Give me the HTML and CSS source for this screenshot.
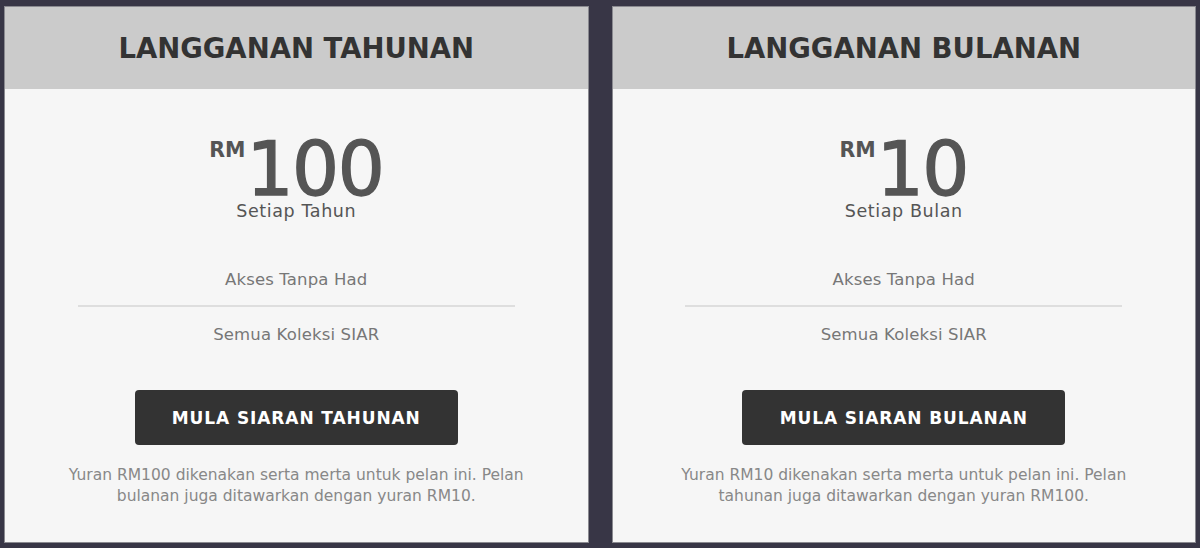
FILE: index.html
```html
<!DOCTYPE html>
<html lang="ms">
<head>
<meta charset="utf-8">
<title>Langganan</title>
<link rel="stylesheet" href="styles.css">
</head>
<body>
<div class="plans">
  <section class="plan">
    <header class="plan-head"><h2>LANGGANAN TAHUNAN</h2></header>
    <div class="plan-body">
      <div class="price">
        <span class="cur">RM</span><span class="amount">100</span>
      </div>
      <div class="period">Setiap Tahun</div>
      <ul class="features">
        <li>Akses Tanpa Had</li>
        <li>Semua Koleksi SIAR</li>
      </ul>
      <button class="cta">MULA SIARAN TAHUNAN</button>
      <p class="note">Yuran RM100 dikenakan serta merta untuk pelan ini. Pelan<br>bulanan juga ditawarkan dengan yuran RM10.</p>
    </div>
  </section>
  <section class="plan">
    <header class="plan-head"><h2>LANGGANAN BULANAN</h2></header>
    <div class="plan-body">
      <div class="price">
        <span class="cur">RM</span><span class="amount">10</span>
      </div>
      <div class="period">Setiap Bulan</div>
      <ul class="features">
        <li>Akses Tanpa Had</li>
        <li>Semua Koleksi SIAR</li>
      </ul>
      <button class="cta">MULA SIARAN BULANAN</button>
      <p class="note">Yuran RM10 dikenakan serta merta untuk pelan ini. Pelan<br>tahunan juga ditawarkan dengan yuran RM100.</p>
    </div>
  </section>
</div>
</body>
</html>
```
FILE: styles.css
```css
* { box-sizing: border-box; }
html, body { margin: 0; padding: 0; }
body {
  background: #383646;
  font-family: "DejaVu Sans", "Open Sans", sans-serif;
  width: 1200px;
  height: 548px;
  overflow: hidden;
}
.plans {
  display: flex;
  gap: 23px;
  padding: 6px 4px 5px 4px;
  height: 548px;
}
.plan {
  flex: 1;
  background: #f6f6f6;
  border: 1px solid #8a8a90;
  display: flex;
  flex-direction: column;
}
.plan-head {
  background: #cbcbcb;
  height: 82px;
  display: flex;
  align-items: center;
  justify-content: center;
}
.plan-head h2 {
  margin: 0;
  font-size: 27.5px;
  font-weight: 700;
  color: #333;
}
.plan-body {
  display: flex;
  flex-direction: column;
  align-items: center;
  padding-top: 49.4px;
}
.price {
  display: flex;
  align-items: flex-start;
  color: #555;
  height: 62px;
}
.cur {
  font-size: 20.5px;
  font-weight: 700;
  line-height: 20.5px;
  margin-top: 1.4px;
  margin-right: 1px;
}
.amount {
  font-size: 74px;
  font-weight: 400;
  line-height: 62px;
  letter-spacing: -1.5px;
  -webkit-text-stroke: 1.4px #555;
}
.period {
  font-size: 17.5px;
  color: #555;
  line-height: 22px;
  letter-spacing: 0.6px;
}
.features {
  list-style: none;
  margin: 47px 0 0 0;
  padding: 0;
  width: 437px;
}
.features li {
  text-align: center;
  font-size: 16.5px;
  color: #777;
  line-height: 22px;
  letter-spacing: 0.15px;
  padding: 0 0 14px;
}
.features li + li {
  border-top: 2px solid #dedede;
  padding: 17px 0 0;
}
.cta {
  margin-top: 44px;
  width: 323px;
  height: 55px;
  background: #333;
  color: #fff;
  border: 0;
  border-radius: 4px;
  font-family: inherit;
  font-size: 17px;
  font-weight: 700;
  letter-spacing: 0.9px;
}
.note {
  margin: 20px 0 0;
  text-align: center;
  font-size: 15.5px;
  line-height: 21px;
  color: #888;
}
```
